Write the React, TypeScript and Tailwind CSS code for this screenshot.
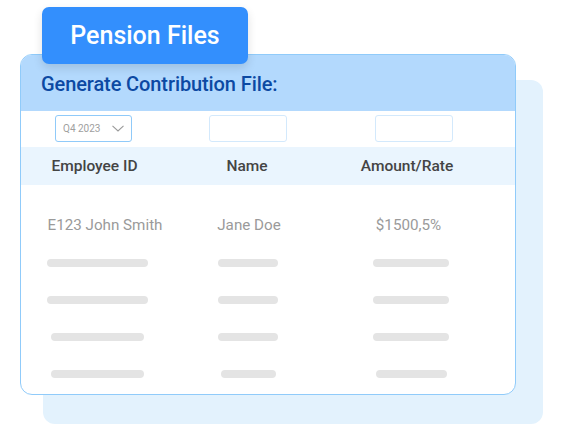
import React from "react";

const bars: [number, number, number][] = [
  [101, 60, 76],
  [101, 60, 76],
  [93, 60, 76],
  [93, 55, 71],
];

function Bar({ w }: { w: number }) {
  return <div className="h-2 rounded-full bg-[#e4e4e4]" style={{ width: w }} />;
}

export default function App() {
  return (
    <div
      className="relative w-[564px] h-[434px] bg-white overflow-hidden"
      style={{ fontFamily: "Roboto, 'Noto Sans', sans-serif" }}
    >
      {/* back panel */}
      <div className="absolute left-[43px] top-[80px] w-[500px] h-[344px] rounded-[12px] bg-[#e3f2fd]" />

      {/* front card */}
      <div className="absolute left-[20px] top-[54px] w-[496px] h-[341px] rounded-[12px] border border-[#90cbfa] bg-white overflow-hidden">
        <div className="h-[56px] bg-[#b3d9fd] flex items-center pl-[20px] pt-[1px]">
          <span className="text-[20px] font-medium text-[#0c49a3] tracking-[-0.1px]">
            Generate Contribution File:
          </span>
        </div>
        <div className="h-[36px] grid grid-cols-[154px_148px_172px] items-start pt-[4px]">
          <div className="ml-[34px] w-[77px] h-[27px] rounded-[3px] border border-[#90caf9] flex items-center justify-between pl-[7px] pr-[7px]">
            <span className="text-[10px] text-[#a0a0a0]">Q4 2023</span>
            <svg width="12" height="7" viewBox="0 0 12 7" fill="none">
              <path d="M0.5 0.8 L6 6 L11.5 0.8" stroke="#9a9a9a" strokeWidth="1.1" />
            </svg>
          </div>
          <div className="ml-[34px] w-[78px] h-[27px] rounded-[3px] border border-[#d3e9fc]" />
          <div className="ml-[52px] w-[78px] h-[27px] rounded-[3px] border border-[#d3e9fc]" />
        </div>
        <div className="h-[38px] pt-[2px] bg-[#eaf5fe] grid grid-cols-[154px_148px_172px] items-center text-[15.5px] font-medium text-[#444]">
          <div className="text-center -ml-[7px]">Employee ID</div>
          <div className="text-center -ml-[4px]">Name</div>
          <div className="text-center -ml-[4px]">Amount/Rate</div>
        </div>
        <div className="grid grid-cols-[154px_148px_172px] items-center h-[24px] mt-[28px] text-[15.2px] text-[#9a9a9a]">
          <div className="text-center ml-[14px]">E123 John Smith</div>
          <div className="text-center">Jane Doe</div>
          <div className="text-center -ml-[1px]">$1500,5%</div>
        </div>
        <div className="flex flex-col gap-[29px] mt-[22px]">
          {bars.map((b, i) => (
            <div key={i} className="grid grid-cols-[154px_148px_172px] h-2">
              <div className="flex justify-center -ml-[2px]">
                <Bar w={b[0]} />
              </div>
              <div className="flex justify-center -ml-[2px]">
                <Bar w={b[1]} />
              </div>
              <div className="flex justify-center ml-[4px]">
                <Bar w={b[2]} />
              </div>
            </div>
          ))}
        </div>
      </div>

      {/* button */}
      <div className="absolute left-[42px] top-[7px] w-[206px] h-[57px] rounded-[7px] bg-[#338ffd] flex items-center justify-center shadow-[0_4px_10px_rgba(0,0,0,0.12)]">
        <span className="text-[25px] font-medium text-white">Pension Files</span>
      </div>
    </div>
  );
}
